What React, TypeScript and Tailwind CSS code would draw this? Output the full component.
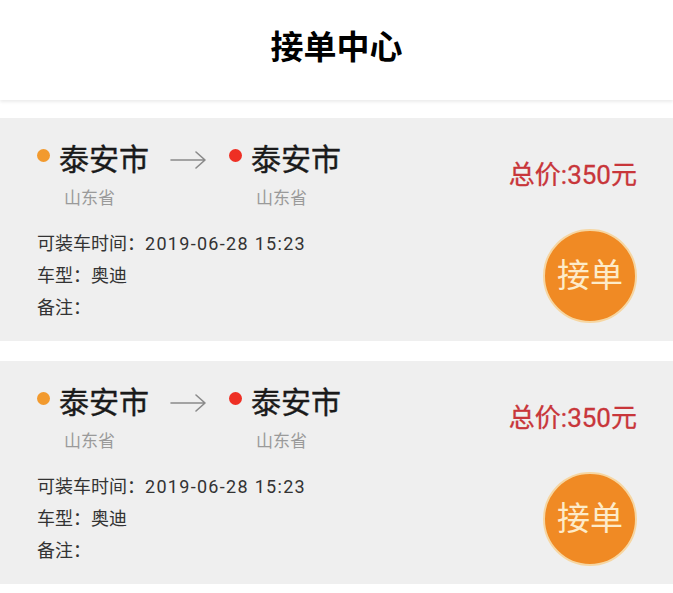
import React from "react";

// ─── Data ───────────────────────────────────────────────────

interface Order {
  id: number;
  fromCity: string;
  fromProvince: string;
  toCity: string;
  toProvince: string;
  loadTime: string;
  carType: string;
  remark: string;
  price: number;
}

const orders: Order[] = [
  {
    id: 1,
    fromCity: "泰安市",
    fromProvince: "山东省",
    toCity: "泰安市",
    toProvince: "山东省",
    loadTime: "2019-06-28 15:23",
    carType: "奥迪",
    remark: "",
    price: 350,
  },
  {
    id: 2,
    fromCity: "泰安市",
    fromProvince: "山东省",
    toCity: "泰安市",
    toProvince: "山东省",
    loadTime: "2019-06-28 15:23",
    carType: "奥迪",
    remark: "",
    price: 350,
  },
];

const font = "font-['Roboto','Noto_Sans_CJK_SC',sans-serif]";

// ─── Route point ────────────────────────────────────────────

function Place({ city, province, dot }: { city: string; province: string; dot: string }) {
  return (
    <div className="flex flex-col">
      <div className="flex items-center">
        <span className={`block size-[13px] rounded-full ${dot} -mt-[10px]`} />
        <span className="ml-[9px] text-[30px] leading-[40px] text-[#1a1a1a] [-webkit-text-stroke:0.4px_#1a1a1a]">{city}</span>
      </div>
      <span className="ml-[27px] mt-[5px] text-[17px] leading-[26px] text-[#9a9a9a]">{province}</span>
    </div>
  );
}

function Arrow() {
  return (
    <svg width="40" height="20" viewBox="0 0 40 20" className="ml-[20px] mr-[20px] mt-[10px] shrink-0" aria-hidden="true">
      <path d="M2 10h34M27 2l9 8-9 8" fill="none" stroke="#8a8a8a" strokeWidth="1.6" strokeLinecap="round" strokeLinejoin="round" />
    </svg>
  );
}

// ─── Order card ─────────────────────────────────────────────

function OrderCard({ order }: { order: Order }) {
  return (
    <div className="flex h-[223px] bg-[#efefef] pl-[37px] pr-[36px] pt-[22px]">
      <div className="flex flex-1 flex-col">
        <div className="flex items-start">
          <Place city={order.fromCity} province={order.fromProvince} dot="bg-[#f29a2e]" />
          <Arrow />
          <Place city={order.toCity} province={order.toProvince} dot="bg-[#ee2f24]" />
        </div>
        <div className="mt-[17px] flex flex-col text-[18px] leading-[32px] text-[#333]">
          <span>
            可装车时间：<span className="tracking-[1.3px]">{order.loadTime}</span>
          </span>
          <span>车型：{order.carType}</span>
          <span>备注：{order.remark}</span>
        </div>
      </div>
      <div className="flex flex-col items-end">
        <span className="mt-[19px] text-[26px] leading-[32px] text-[#c8363a] [-webkit-text-stroke:0.3px_#c8363a]">总价:{order.price}元</span>
        <button className="mt-[38px] flex size-[94px] items-center justify-center rounded-full border-2 border-[#f6d6a2] bg-[#f08a24] text-[33px] text-[#fdebc9]">
          接单
        </button>
      </div>
    </div>
  );
}

// ─── Page ───────────────────────────────────────────────────

export default function App() {
  return (
    <div className={`min-h-[593px] w-full bg-white ${font}`}>
      <header className="flex h-[100px] items-center justify-center bg-white pb-[4px] shadow-[0_2px_3px_rgba(0,0,0,0.08)]">
        <h1 className="text-[33px] font-bold text-black">接单中心</h1>
      </header>
      <div className="mt-[18px] flex flex-col gap-[20px]">
        {orders.map((o) => (
          <OrderCard key={o.id} order={o} />
        ))}
      </div>
    </div>
  );
}
